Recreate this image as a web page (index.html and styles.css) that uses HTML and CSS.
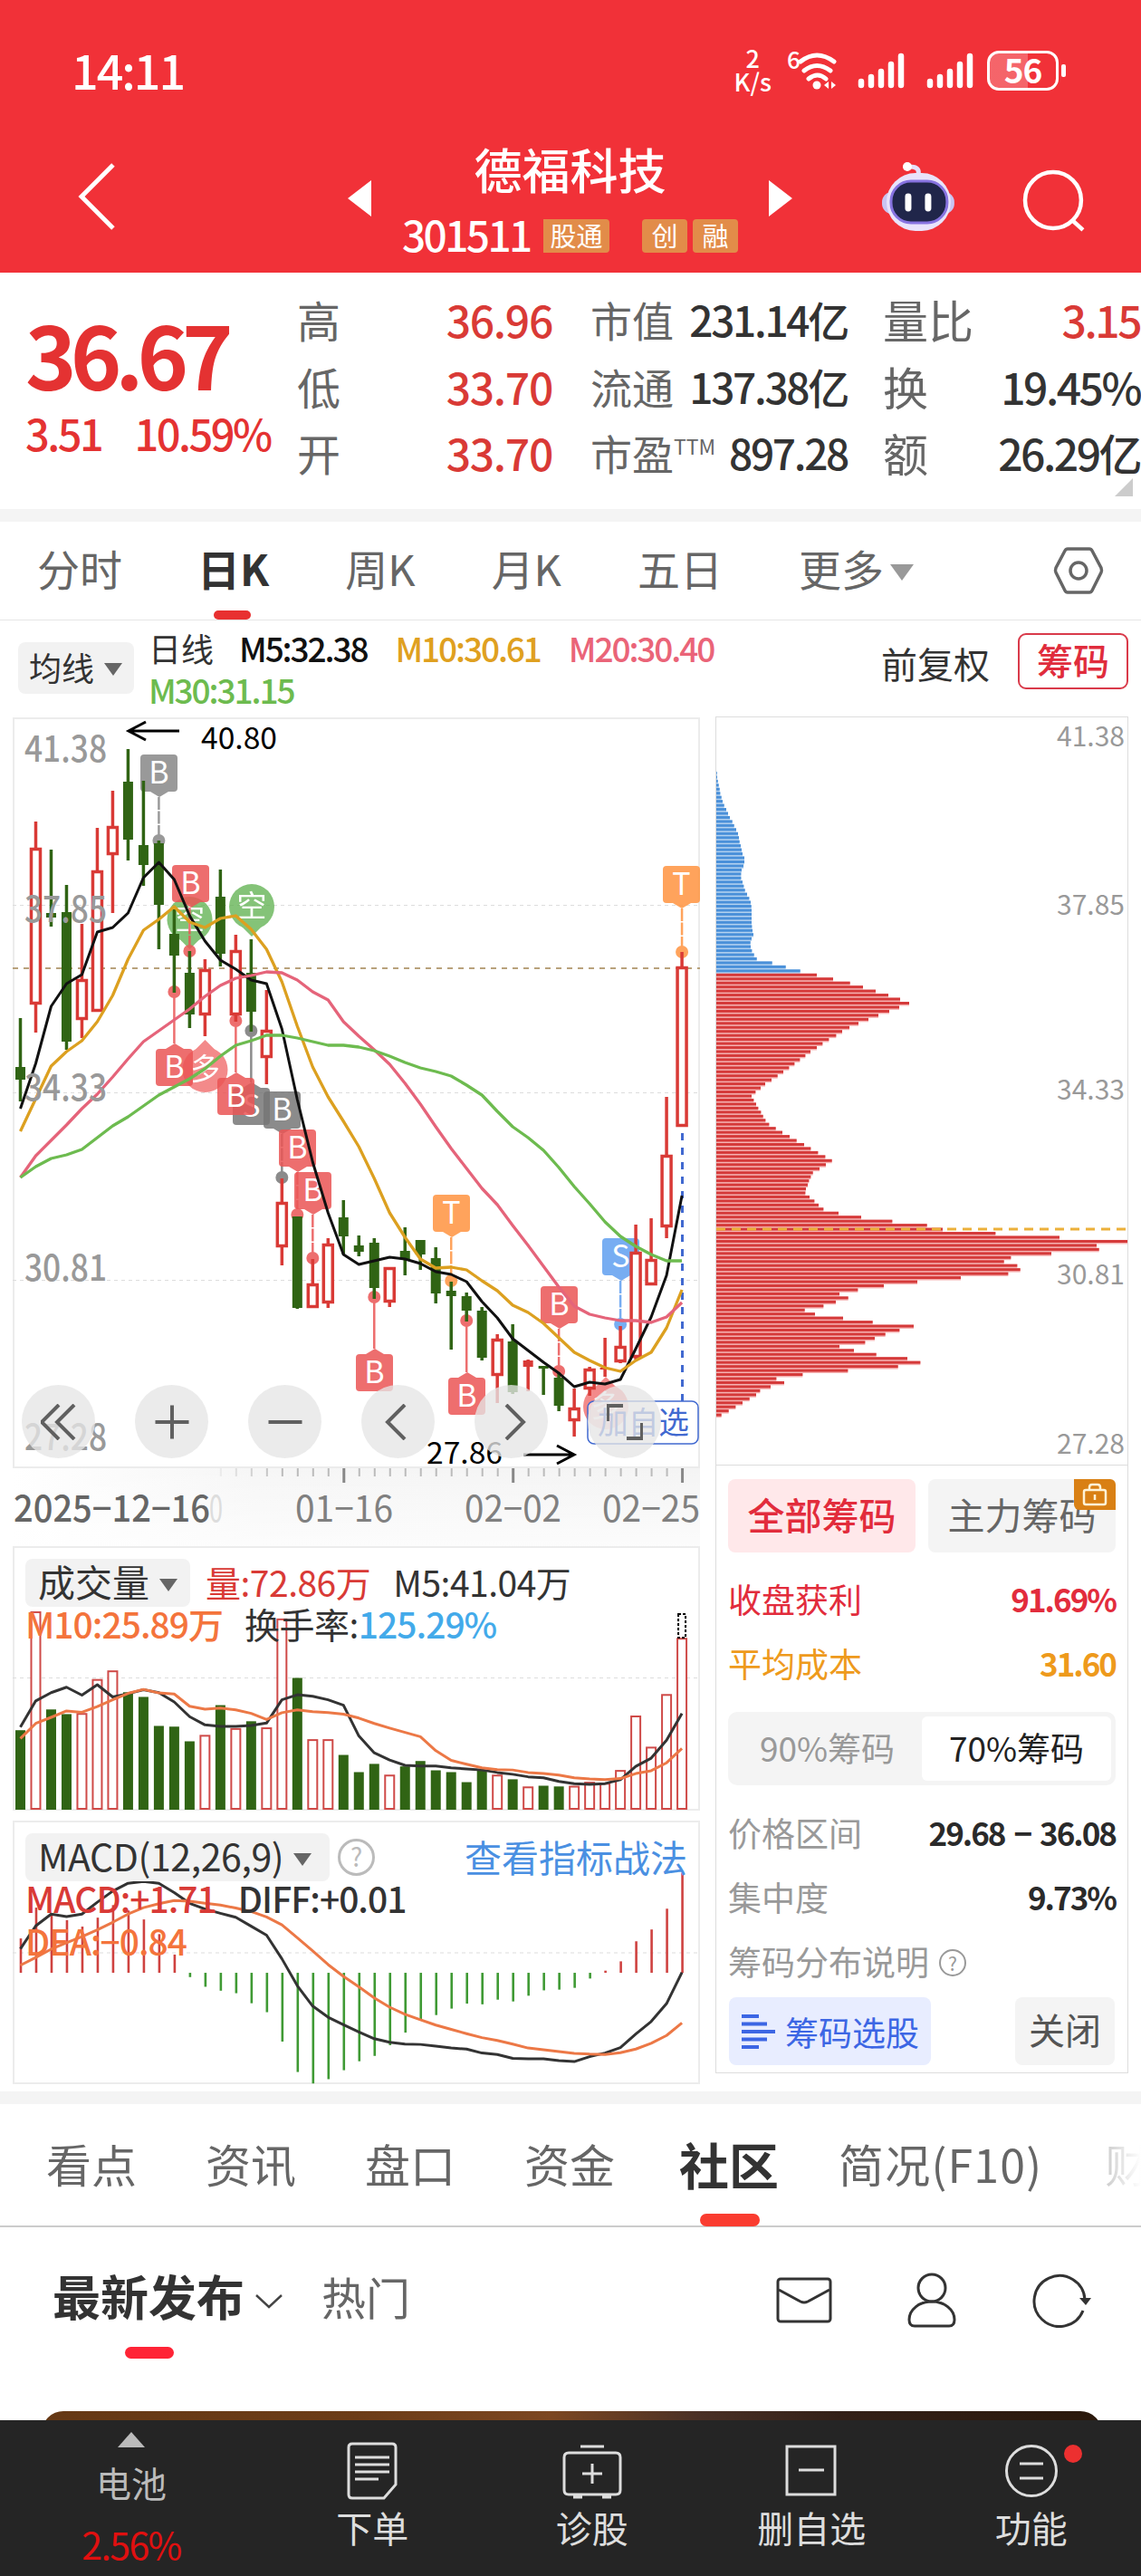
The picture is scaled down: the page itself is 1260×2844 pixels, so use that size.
FILE: index.html
```html
<!DOCTYPE html>
<html lang="zh-CN">
<head>
  <meta charset="UTF-8">
  <meta name="viewport" content="width=device-width, initial-scale=1.0">
  <title>德福科技 301511</title>
  <link rel="stylesheet" href="styles.css">
</head>
<body>
  <div class="app">
    <header class="header">
      <div class="status">
        <span class="time">14:11</span>
        <div class="status-right">
          <span class="speed">2<br>K/s</span>
          <svg class="wifi" width="58" height="44" viewBox="0 0 58 44" fill="none" stroke="#fff" stroke-width="5" stroke-linecap="round">
            <text x="0" y="20" class="wifi-num">6</text>
            <path d="M15 12q18-14 37 0M19 22q14-11 29 0M24 31q10-8 19 0"/>
            <circle cx="33" cy="38" r="4.5" fill="#fff" stroke="none"/>
            <path d="M41 38l5-4v8zM54 38l-5-4v8z" fill="#fff" stroke="none"/>
          </svg>
          <svg class="signal" width="52" height="42" viewBox="0 0 52 42" stroke="#fff" stroke-width="6.5" stroke-linecap="round"><path d="M4 33v4M15 28v9M26 22v15M37 14v23M48 5v32"/></svg>
          <svg class="signal second" width="52" height="42" viewBox="0 0 52 42" stroke="#fff" stroke-width="6.5" stroke-linecap="round"><path d="M4 33v4M15 28v9M26 22v15M37 14v23M48 5v32"/></svg>
          <span class="battery">56</span>
          <i class="battery-nub"></i>
        </div>
      </div>
      <div class="navbar">
        <svg class="back" width="44" height="76" viewBox="0 0 44 76" fill="none" stroke="#fff" stroke-width="5"><path d="M40 3L5 38l35 35"/></svg>
        <svg class="prev" width="26" height="40" viewBox="0 0 26 40"><path d="M26 0v40L0 20z" fill="#fff"/></svg>
        <div class="stock">
          <div class="stock-name">德福科技</div>
          <div class="stock-code">
            <span class="code">301511</span>
            <span class="tag tag-cut">股通</span>
            <span class="tag tag-gap">创</span>
            <span class="tag">融</span>
          </div>
        </div>
        <svg class="next" width="26" height="40" viewBox="0 0 26 40"><path d="M0 0v40l26-20z" fill="#fff"/></svg>
        <svg class="robot" width="84" height="78" viewBox="0 0 84 78">
          <path d="M42 15c2-8-4-9-10-9" fill="none" stroke="#e6e0fa" stroke-width="5"/>
          <circle cx="30" cy="6" r="5" fill="#fff"/>
          <rect x="2" y="34" width="80" height="24" rx="11" fill="#c9c4f2"/>
          <rect x="7" y="13" width="71" height="64" rx="32" fill="#e9e3fb"/>
          <rect x="12" y="22" width="62" height="46" rx="22" fill="#20264a" stroke="#8773e0" stroke-width="3"/>
          <path d="M31 39v13M53 39v13" stroke="#fff" stroke-width="7" stroke-linecap="round"/>
        </svg>
        <svg class="search" width="70" height="70" viewBox="0 0 70 70" fill="none" stroke="#fff" stroke-width="4.5"><circle cx="34" cy="34" r="31"/><path d="M55 56l12 11"/></svg>
      </div>
    </header>

    <section class="quote">
      <div class="price-box">
        <div class="price">36.67</div>
        <div class="change"><span>3.51</span><span>10.59%</span></div>
      </div>
      <div class="quote-col col-a">
        <div><label>高</label><b class="red">36.96</b></div>
        <div><label>低</label><b class="red">33.70</b></div>
        <div><label>开</label><b class="red">33.70</b></div>
      </div>
      <div class="quote-col col-b">
        <div><label>市值</label><b>231.14亿</b></div>
        <div><label>流通</label><b>137.38亿</b></div>
        <div><label>市盈<sup>TTM</sup></label><b>897.28</b></div>
      </div>
      <div class="quote-col col-c">
        <div><label>量比</label><b class="red">3.15</b></div>
        <div><label>换</label><b>19.45%</b></div>
        <div><label>额</label><b>26.29亿</b></div>
      </div>
      <i class="corner"></i>
    </section>

    <nav class="period">
      <a>分时</a>
      <a class="on">日K</a>
      <a>周K</a>
      <a>月K</a>
      <a>五日</a>
      <a>更多<i class="tri"></i></a>
      <svg class="hex" width="56" height="56" viewBox="0 0 56 56" fill="none" stroke="#666" stroke-width="3.5"><path d="M16 4h24q2 0 3 2l10 19q1 3 0 5L43 50q-1 2-3 2H16q-2 0-3-2L3 30q-1-2 0-5L13 6q1-2 3-2z"/><circle cx="28" cy="28" r="9"/></svg>
    </nav>

    <div class="ma-bar">
      <span class="chip">均线<i class="tri"></i></span>
      <div class="ma-list">
        <span class="dark">日线</span><span class="m5">M5:32.38</span><span class="m10">M10:30.61</span><span class="m20">M20:30.40</span><span class="m30">M30:31.15</span>
      </div>
      <span class="adjust">前复权</span>
      <span class="chip-btn">筹码</span>
    </div>

    <main class="charts">
      <div class="left">
        <div class="kline">
          <svg id="kline" width="760" height="830" viewBox="14 790 760 830"></svg>
          <div class="tools">
            <span><svg viewBox="0 0 40 40"><path d="M20 1L1 20l19 19M37 1L18 20l19 19"/></svg></span>
            <span><svg viewBox="0 0 40 40"><path d="M1.500 20h37M20 1.500v37"/></svg></span>
            <span><svg viewBox="0 0 40 40"><path d="M1.500 20h37"/></svg></span>
            <span><svg viewBox="0 0 40 40"><path d="M27 1L8 20l19 19"/></svg></span>
            <span><svg viewBox="0 0 40 40"><path d="M14 1l19 19-19 19"/></svg></span>
            <span><svg viewBox="0 0 40 40"><path d="M1 19V2h17M39 21v17H22"/></svg></span>
          </div>
        </div>
        <svg id="dates" width="760" height="87" viewBox="14 1620 760 87"></svg>
        <div class="panel volume">
          <svg id="volume" width="760" height="292" viewBox="14 0 760 292"></svg>
          <div class="legend">
            <p><span class="chip">成交量<i class="tri"></i></span><span class="red">量:72.86万</span><span class="dark">M5:41.04万</span></p>
            <p><span class="orange">M10:25.89万</span><span class="dark rate">换手率:<em>125.29%</em></span></p>
          </div>
        </div>
        <div class="panel macd">
          <svg id="macd" width="760" height="292" viewBox="14 0 760 292"></svg>
          <div class="legend">
            <p><span class="chip">MACD(12,26,9)<i class="tri"></i></span><span class="help">?</span><a class="guide">查看指标战法</a></p>
            <p><span class="red">MACD:+1.71</span><span class="dark">DIFF:+0.01</span></p>
            <p><span class="orange">DEA:−0.84</span></p>
          </div>
        </div>
      </div>

      <aside class="right">
        <svg id="chips" width="456" height="827" viewBox="790 791 456 827"></svg>
        <div class="dist">
          <div class="dist-tabs">
            <span class="on">全部筹码</span>
            <span>主力筹码
              <i class="lock"><svg width="28" height="26" viewBox="0 0 28 26" fill="none" stroke="#fff3d6" stroke-width="2.500"><rect x="2" y="8" width="24" height="16" rx="2"/><path d="M8 8V5q0-3 3-3h6q3 0 3 3v3M14 13v6"/></svg></i>
            </span>
          </div>
          <div class="dist-row crimson"><span>收盘获利</span><b>91.69%</b></div>
          <div class="dist-row amber"><span>平均成本</span><b>31.60</b></div>
          <div class="segment"><span>90%筹码</span><span class="on">70%筹码</span></div>
          <div class="dist-row"><span>价格区间</span><b class="range">29.68 − 36.08</b></div>
          <div class="dist-row"><span>集中度</span><b>9.73%</b></div>
          <div class="dist-row note"><span>筹码分布说明<i class="help small">?</i></span></div>
          <div class="dist-btns">
            <span class="pick"><svg width="38" height="38" viewBox="0 0 38 38" stroke="#3c66e4" stroke-width="4"><path d="M0 2h19M0 10.500h28M0 19h37M0 27.500h28M0 36h19"/></svg>筹码选股</span>
            <span class="close">关闭</span>
          </div>
        </div>
      </aside>
    </main>

    <nav class="section-tabs">
      <a>看点</a>
      <a>资讯</a>
      <a>盘口</a>
      <a>资金</a>
      <a class="on">社区</a>
      <a class="brief">简况(F10)</a>
      <a class="fade">财务</a>
    </nav>

    <div class="posts-bar">
      <span class="latest">最新发布</span>
      <svg class="down" width="30" height="18" viewBox="0 0 30 18" fill="none" stroke="#444" stroke-width="2.500"><path d="M1 2l14 13L29 2"/></svg>
      <span class="hot">热门</span>
      <div class="posts-icons">
        <svg width="62" height="62" viewBox="0 0 62 62" fill="none" stroke="#333" stroke-width="3"><rect x="2" y="8" width="58" height="47" rx="3"/><path d="M3 20l24 13q4 2 8 0l24-13"/></svg>
        <svg width="62" height="62" viewBox="0 0 62 62" fill="none" stroke="#333" stroke-width="3"><circle cx="31" cy="18" r="15"/><path d="M31 33c-14 0-25 9-25 20q0 7 6 7h38q6 0 6-7c0-11-11-20-25-20z"/></svg>
        <svg width="66" height="62" viewBox="0 0 66 62" fill="none" stroke="#333" stroke-width="3"><path d="M57 43A28 28 0 1 1 59 31"/><path d="M53 29h13l-6 8z" fill="#333" stroke="none"/></svg>
      </div>
    </div>

    <div class="banner-wrap"><div class="banner"></div></div>

    <footer class="tabbar">
      <div class="sector"><i></i><span>电池</span><b>2.56%</b></div>
      <div class="item">
        <svg width="66" height="66" viewBox="0 0 66 66"><path d="M11 3h44q4 0 4 4v41L46 63H11q-4 0-4-4V7q0-4 4-4zM14 18h38M14 26h38M14 34h38M14 42h26"/></svg>
        <span>下单</span>
      </div>
      <div class="item">
        <svg width="66" height="66" viewBox="0 0 66 66"><path d="M7 13h52q5 0 5 5v36q0 5-5 5H7q-5 0-5-5V18q0-5 5-5zM20 6h26M22 36h22M33 25v22M12 62h10M44 62h10"/></svg>
        <span>诊股</span>
      </div>
      <div class="item">
        <svg width="66" height="66" viewBox="0 0 66 66"><path d="M6 6h53v53H6zM19 32h28"/></svg>
        <span>删自选</span>
      </div>
      <div class="item">
        <svg width="66" height="66" viewBox="0 0 66 66"><circle cx="33" cy="33" r="27.500"/><path d="M20 25h26M20 41h26"/></svg>
        <span>功能</span>
        <i class="dot"></i>
      </div>
    </footer>
  </div>
  <script src="charts.js"></script>
</body>
</html>
```

FILE: styles.css
```css
* {
  margin: 0;
  padding: 0;
  box-sizing: border-box;
}
body {
  width: 1260px;
  background: #fff;
  color: #333;
  font-family: "Noto Sans CJK SC", "Noto Sans", sans-serif;
}
i,
em {
  font-style: normal;
}
svg {
  display: block;
}
.app {
  height: 2844px;
  display: flex;
  flex-direction: column;
  overflow: hidden;
}
.red {
  color: #d93a36;
}
.dark {
  color: #333;
}
.orange {
  color: #f4743c;
}
.tri {
  display: inline-block;
  border: 10px solid transparent;
  border-top: 14px solid #666;
  border-bottom: 0;
}

/* header */
.header {
  height: 301px;
  background: #f13138;
  color: #fff;
}
.status {
  height: 156px;
  padding: 56px 83px 0 79px;
  display: flex;
  justify-content: space-between;
}
.time {
  font-size: 52px;
  font-weight: 500;
  line-height: 42px;
  letter-spacing: -2px;
}
.status-right {
  display: flex;
  height: 44px;
}
.speed {
  font-size: 27px;
  line-height: 26px;
  height: 52px;
  text-align: center;
  font-weight: 500;
  margin: -5px 17px 0 0;
}
.wifi-num {
  font-size: 26px;
  font-weight: 500;
  fill: #fff;
  stroke: none;
}
.signal {
  margin: 1px 0 0 20px;
}
.signal.second {
  margin-left: 24px;
}
.battery {
  width: 79px;
  height: 44px;
  margin-left: 15px;
  border: 3.500px solid #fff;
  border-radius: 13px;
  background: linear-gradient(90deg, rgba(255, 255, 255, .25) 58%, transparent 58%);
  font-size: 37px;
  font-weight: 700;
  line-height: 34px;
  letter-spacing: -1px;
  text-align: center;
}
.battery-nub {
  width: 5px;
  height: 14px;
  margin: 15px 0 0 3px;
  border-radius: 2px;
  background: #fff;
}
.navbar {
  height: 145px;
  padding: 0 61px 0 85px;
  display: flex;
}
.back {
  margin-top: 23px;
}
.prev {
  margin: 43px 0 0 255px;
}
.stock {
  width: 440px;
  text-align: center;
}
.stock-name {
  font-size: 53px;
  font-weight: 500;
  line-height: 61px;
}
.stock-code {
  height: 50px;
  margin-top: 18px;
  padding-left: 34px;
  display: flex;
  align-items: center;
}
.code {
  width: 156px;
  font-size: 46px;
  font-weight: 500;
  letter-spacing: -2.600px;
  line-height: 46px;
  margin-top: -4px;
  text-align: left;
}
.tag {
  height: 37px;
  width: 50px;
  margin-right: 6px;
  background: #e28c49;
  border-radius: 4px;
  font-size: 29px;
  line-height: 34px;
}
.tag-cut {
  width: 73px;
  margin-right: 36px;
  border-radius: 0 4px 4px 0;
}
.next {
  margin-top: 43px;
}
.robot {
  margin: 22px 0 0 97px;
}
.search {
  margin: 31px 0 0 73px;
}

/* quote */
.quote {
  position: relative;
  height: 275px;
  border-bottom: 14px solid #f4f4f4;
  display: flex;
  font-size: 48px;
}
.price-box {
  width: 328px;
  padding: 24px 0 0 28px;
  color: #e43232;
}
.price {
  font-size: 96px;
  font-weight: 700;
  line-height: 130px;
  letter-spacing: -7px;
}
.change {
  display: flex;
  gap: 36px;
  font-size: 47px;
  font-weight: 500;
  line-height: 46px;
  letter-spacing: -2.500px;
}
.quote-col {
  padding-top: 15px;
}
.quote-col div {
  height: 73.500px;
  line-height: 73px;
  display: flex;
  justify-content: space-between;
  white-space: nowrap;
}
.quote-col label {
  color: #666;
}
.quote-col b {
  font-weight: 500;
  letter-spacing: -1.300px;
}
.col-a {
  width: 282px;
}
.col-b {
  width: 284px;
  margin-left: 42px;
  font-size: 46px;
}
.col-b b {
  letter-spacing: -2.300px;
}
.col-b sup {
  font-size: 23px;
  vertical-align: 17px;
  line-height: 0;
}
.col-c {
  width: 284px;
  margin-left: 39px;
}
.col-c b {
  letter-spacing: -2.500px;
}
.col-c label {
  font-size: 50px;
}
.corner {
  position: absolute;
  right: 9px;
  bottom: 14px;
  border-left: 20px solid transparent;
  border-bottom: 20px solid #ccc;
}

/* period tabs */
.period {
  height: 109px;
  padding: 0 41px;
  border-bottom: 1px solid #e5e5e5;
  display: flex;
  font-size: 47px;
  line-height: 102px;
  color: #666;
}
.period a {
  position: relative;
  margin-right: 84px;
  white-space: nowrap;
}
.period .on {
  margin-right: 84px;
  margin-left: -1px;
  color: #333;
  font-weight: 700;
}
.period a:nth-child(6) {
  margin-right: 0;
}
.period .on::after {
  content: "";
  position: absolute;
  left: 18px;
  bottom: 0;
  width: 41px;
  height: 10px;
  border-radius: 5px;
  background: #e83030;
}
.period .tri {
  border-width: 18px 13px 0;
  border-top-color: #999;
  margin-left: 7px;
  vertical-align: 6px;
}
.hex {
  margin: 26px 0 0 auto;
}

/* moving averages */
.ma-bar {
  height: 106px;
  padding: 14px 14px 0 20px;
  display: flex;
}
.chip {
  height: 57px;
  padding: 0 12px;
  border-radius: 8px;
  background: #f2f2f2;
  font-size: 36px;
  line-height: 54px;
  white-space: nowrap;
  color: #333;
}
.chip .tri {
  margin-left: 11px;
  vertical-align: 6px;
}
.ma-bar .chip {
  margin-top: 10px;
  width: 128px;
}
.ma-list {
  width: 700px;
  margin: -7px 0 0 16px;
  font-size: 37px;
  line-height: 46px;
  letter-spacing: -2.100px;
  font-weight: 500;
}
.ma-list span {
  margin-right: 31px;
  white-space: nowrap;
}
.ma-list .dark {
  margin-right: 28px;
  font-size: 36px;
  font-weight: 400;
  letter-spacing: 0;
}
.m5 {
  color: #111;
}
.m10 {
  color: #dfa020;
}
.m20 {
  color: #ea6478;
}
.m30 {
  color: #6dbb4f;
  display: inline-block;
}
.adjust {
  margin-left: 109px;
  font-size: 40px;
  line-height: 66px;
  white-space: nowrap;
}
.chip-btn {
  width: 122px;
  height: 62px;
  margin-left: auto;
  border: 2px solid #d93a4a;
  border-radius: 9px;
  color: #e02c3c;
  font-size: 40px;
  font-weight: 500;
  line-height: 54px;
  text-align: center;
}

/* charts */
.charts {
  height: 1518px;
  padding-left: 14px;
  display: flex;
}
.left {
  width: 760px;
}
.kline {
  position: relative;
  height: 829px;
}
.tools {
  position: absolute;
  left: 10px;
  bottom: 10px;
  display: flex;
  gap: 44px;
}
.tools span {
  width: 81px;
  height: 81px;
  border-radius: 50%;
  background: rgba(230, 230, 230, .78);
  display: flex;
  align-items: center;
  justify-content: center;
}
.tools svg {
  width: 40px;
  height: 40px;
  fill: none;
  stroke: #606060;
  stroke-width: 4;
}
#kline,
#dates,
#volume,
#macd,
#chips {
  font-size: 40px;
}
.panel {
  position: relative;
  height: 292px;
  margin-bottom: 11px;
}
.panel svg {
  display: block;
}
.legend {
  position: absolute;
  left: 0;
  top: 14px;
  width: 760px;
  padding: 0 15px 0 14px;
  font-size: 39px;
  letter-spacing: -.500px;
}
.legend p {
  display: flex;
  height: 47px;
  line-height: 36px;
  white-space: nowrap;
  gap: 24px;
}
.legend p:first-child {
  height: 53px;
  line-height: 50px;
  gap: 17px;
}
.volume p:first-child .red {
  margin-right: 8px;
}
.volume .orange,
.macd p:nth-child(n+2) {
  font-weight: 500;
  letter-spacing: -1px;
}
.legend .chip {
  height: 53px;
  padding: 0 14px;
  font-size: 41px;
  line-height: 48px;
  letter-spacing: 0;
}
.macd .chip {
  width: 336px;
  letter-spacing: -.400px;
}
.rate em {
  color: #43aaea;
  font-weight: 500;
  letter-spacing: -1px;
}
.help {
  width: 41px;
  height: 41px;
  border: 3px solid #bbb;
  border-radius: 50%;
  color: #bbb;
  font-size: 28px;
  line-height: 34px;
  text-align: center;
}
.legend .help {
  margin: 6px 0 0 -8px;
  line-height: 33px;
}
.guide {
  margin-left: auto;
  font-size: 41px;
  color: #4a90e2;
  letter-spacing: 0;
}

/* chip distribution */
.right {
  width: 456px;
  margin-left: 16px;
}
.dist {
  height: 671px;
  border: 1px solid #ddd;
  border-top: 0;
  padding: 15px 13px 0;
}
.dist-tabs {
  display: flex;
  gap: 14px;
  margin-bottom: 15px;
}
.dist-tabs span {
  position: relative;
  width: 207px;
  height: 81px;
  border-radius: 8px;
  background: #f4f4f4;
  color: #666;
  font-size: 41px;
  line-height: 77px;
  text-align: center;
}
.dist-tabs .on {
  background: #ffe8ea;
  color: #e22c3c;
  font-weight: 500;
}
.lock {
  position: absolute;
  right: 0;
  top: 0;
  width: 46px;
  height: 34px;
  padding: 4px 9px;
  background: #d98014;
  border-radius: 0 6px 0 6px;
}
.dist-row {
  height: 71px;
  display: flex;
  justify-content: space-between;
  align-items: center;
  font-size: 37px;
  color: #999;
}
.dist-row b {
  font-size: 35px;
  font-weight: 700;
  letter-spacing: -2px;
  color: #2a2a2a;
}
.dist-row .range {
  word-spacing: 4px;
}
.crimson,
.crimson b {
  color: #e22c3c;
}
.amber,
.amber b {
  color: #ee9a1c;
}
.segment {
  height: 81px;
  margin: 19px 0 16px;
  padding: 5px;
  display: flex;
  border-radius: 10px;
  background: #f4f4f4;
  font-size: 37px;
  line-height: 68px;
  text-align: center;
  color: #999;
}
.segment span {
  width: 209px;
  border-radius: 6px;
}
.segment .on {
  background: #fff;
  color: #222;
}
.dist-row .small {
  display: inline-block;
  width: 30px;
  height: 30px;
  margin-left: 11px;
  border-width: 2px;
  border-color: #999;
  color: #999;
  font-size: 21px;
  line-height: 26px;
  vertical-align: 5px;
}
.dist-btns {
  display: flex;
  justify-content: space-between;
  margin-top: 5px;
  padding: 0 1px;
  font-size: 37px;
  line-height: 70px;
}
.pick {
  width: 223px;
  height: 75px;
  padding-left: 14px;
  display: flex;
  align-items: center;
  gap: 10px;
  border-radius: 8px;
  background: #e8edff;
  color: #3c66e4;
  white-space: nowrap;
}
.close {
  width: 110px;
  height: 75px;
  border-radius: 8px;
  background: #f4f4f4;
  font-size: 40px;
  text-align: center;
  color: #555;
}

/* section tabs */
.section-tabs {
  position: relative;
  height: 150px;
  border-top: 14px solid #f4f4f4;
  border-bottom: 2px solid #ccc;
  padding-left: 51px;
  display: flex;
  font-size: 50px;
  line-height: 130px;
  color: #666;
}
.section-tabs a {
  position: relative;
  margin-right: 76px;
  white-space: nowrap;
}
.section-tabs a:nth-child(4) {
  margin-right: 71px;
}
.section-tabs .on {
  margin-right: 66px;
  color: #333;
  font-size: 55px;
  font-weight: 700;
}
.section-tabs .on::after {
  content: "";
  position: absolute;
  left: 23px;
  bottom: -1px;
  width: 66px;
  height: 14px;
  border-radius: 7px;
  background: #fa3c30;
}
.section-tabs .brief {
  letter-spacing: 1.200px;
  margin-right: 69px;
}
.section-tabs .fade {
  background: linear-gradient(90deg, #ccc, #fff 40px);
  -webkit-background-clip: text;
  background-clip: text;
  color: transparent;
}

/* posts */
.posts-bar {
  position: relative;
  height: 203px;
  padding: 31px 55px 0 58px;
  display: flex;
}
.latest {
  font-size: 53px;
  font-weight: 700;
  line-height: 88px;
}
.posts-bar::after {
  content: "";
  position: absolute;
  left: 138px;
  top: 132px;
  width: 54px;
  height: 13px;
  border-radius: 7px;
  background: #ff2436;
}
.down {
  margin: 42px 0 0 12px;
}
.hot {
  margin-left: 43px;
  font-size: 49px;
  line-height: 90px;
  color: #666;
}
.posts-icons {
  margin: 18px 0 0 auto;
  display: flex;
  gap: 79px;
}
.banner-wrap {
  height: 10px;
  padding: 0 43px 0 46px;
  overflow: hidden;
}
.banner {
  height: 60px;
  border-radius: 24px;
  background: linear-gradient(90deg, #653815 0%, #6c3c18 30%, #7c4722 48%, #4a3026 62%, #332018 75%, #2a180c 100%);
}

/* bottom bar */
.tabbar {
  height: 172px;
  background: #252525;
  color: #ddd;
  display: flex;
  font-size: 40px;
}
.sector {
  width: 290px;
  display: flex;
  flex-direction: column;
  align-items: center;
}
.sector i {
  margin-top: 13px;
  border: 15px solid transparent;
  border-top: 0;
  border-bottom: 17px solid #bbb;
}
.sector span {
  margin-top: 8px;
  line-height: 60px;
  color: #bbb;
  font-size: 39px;
}
.sector b {
  margin-top: 8px;
  font-size: 41px;
  line-height: 60px;
  font-weight: 400;
  letter-spacing: -1.600px;
  color: #e01010;
}
.item {
  position: relative;
  width: 242.500px;
  padding-top: 23px;
  display: flex;
  flex-direction: column;
  align-items: center;
}
.item svg {
  fill: none;
  stroke: #ddd;
  stroke-width: 3;
}
.item span {
  line-height: 59px;
}
.dot {
  position: absolute;
  left: 157px;
  top: 27px;
  width: 20px;
  height: 20px;
  border-radius: 50%;
  background: #ec3030;
}
```

FILE: charts.js
```js
const GREEN = '#306414'
const RED = '#d93a36'
const STEP = 16.99
const x = i => 22.5 + STEP * i

// type, high, body top, body bottom, low
const candles = [
  ['g', 1123, 1177, 1191, 1215], ['r', 906, 935, 1108, 1139], ['g', 937, 1007, 1012, 1022], ['g', 976, 1006, 1149, 1158],
  ['r', 1019, 1080, 1125, 1145], ['r', 913, 960, 1116, 1116], ['r', 872, 911, 943, 1007], ['g', 826, 862, 926, 949],
  ['g', 861, 932, 954, 977], ['g', 927, 930, 998, 1047], ['g', 1002, 1030, 1054, 1095], ['g', 1049, 1073, 1119, 1134],
  ['r', 1058, 1069, 1120, 1143], ['g', 959, 989, 1052, 1066], ['r', 1031, 1048, 1120, 1127], ['g', 1036, 1073, 1116, 1138],
  ['r', 1092, 1136, 1167, 1196], ['r', 1300, 1326, 1376, 1396], ['g', 1342, 1342, 1443, 1444], ['r', 1389, 1416, 1443, 1443],
  ['r', 1366, 1372, 1438, 1443], ['g', 1324, 1343, 1364, 1384], ['g', 1363, 1374, 1381, 1386], ['g', 1366, 1371, 1421, 1433],
  ['r', 1398, 1398, 1437, 1442], ['g', 1354, 1380, 1389, 1407], ['g', 1368, 1368, 1384, 1401], ['g', 1376, 1388, 1427, 1438],
  ['g', 1414, 1424, 1430, 1489], ['g', 1426, 1430, 1446, 1458], ['g', 1442, 1446, 1498, 1501], ['r', 1472, 1477, 1518, 1548],
  ['g', 1461, 1480, 1536, 1538], ['r', 1500, 1501, 1508, 1535], ['g', 1507, 1507, 1510, 1539], ['g', 1514, 1520, 1551, 1557],
  ['r', 1532, 1553, 1568, 1585], ['r', 1508, 1510, 1533, 1540], ['r', 1476, 1509, 1511, 1519], ['r', 1463, 1485, 1503, 1504],
  ['r', 1351, 1381, 1498, 1500], ['r', 1344, 1389, 1418, 1418], ['r', 1210, 1274, 1354, 1366], ['r', 1050, 1066, 1243, 1243]
]
const ma5 = [1223, 1173, 1110, 1085, 1075, 1028, 1023, 1007, 968, 951, 970, 1010, 1038, 1059, 1069, 1081, 1085, 1135, 1213, 1282, 1338, 1384, 1395, 1391, 1387, 1389, 1394, 1403, 1406, 1414, 1436, 1454, 1477, 1490, 1503, 1515, 1530, 1525, 1527, 1522, 1488, 1453, 1407, 1319]
const ma10 = [1248, 1212, 1176, 1160, 1148, 1127, 1098, 1058, 1026, 1014, 1000, 1017, 1023, 1013, 1010, 1025, 1047, 1083, 1132, 1177, 1210, 1237, 1265, 1300, 1338, 1365, 1389, 1399, 1398, 1401, 1413, 1424, 1440, 1448, 1460, 1476, 1492, 1501, 1509, 1513, 1501, 1492, 1465, 1423]
const ma20 = [1299, 1275, 1258, 1241, 1223, 1207, 1188, 1168, 1149, 1137, 1125, 1113, 1099, 1087, 1079, 1076, 1072, 1073, 1081, 1094, 1103, 1127, 1143, 1158, 1174, 1195, 1218, 1243, 1267, 1289, 1311, 1329, 1352, 1374, 1397, 1420, 1441, 1450, 1454, 1457, 1457, 1459, 1453, 1437]
const ma30 = [1299, 1287, 1278, 1274, 1268, 1255, 1242, 1232, 1220, 1208, 1199, 1190, 1179, 1165, 1153, 1148, 1142, 1142, 1145, 1149, 1153, 1153, 1155, 1159, 1165, 1172, 1178, 1182, 1187, 1197, 1208, 1226, 1243, 1255, 1269, 1288, 1309, 1328, 1348, 1364, 1375, 1384, 1391, 1391]

// letter, color, candle index, box left, box top, dot y
const marks = [
  ['B', '#888', 9, 155, 832, 928], ['B', '#eb5555', 11, 190, 954, 1050], ['B', '#eb5555', 10, 172, 1157, 1095],
  ['S', '#777', 15, 257, 1200, 1138], ['B', '#eb5555', 14, 240, 1189, 1127], ['B', '#777', 17, 291, 1204, 1300],
  ['B', '#eb5555', 18, 308, 1246, 1341], ['B', '#eb5555', 19, 325, 1293, 1389], ['B', '#eb5555', 23, 393, 1494, 1432],
  ['T', '#ff9440', 28, 478, 1318, 1414], ['B', '#eb5555', 29, 495, 1520, 1458], ['B', '#eb5555', 35, 597, 1419, 1514],
  ['S', '#609ff0', 39, 665, 1366, 1462], ['T', '#ff9440', 43, 732, 955, 1051]
]

const volumes = [222, 554, 280, 267, 270, 365, 389, 328, 315, 234, 232, 191, 209, 292, 228, 247, 230, 534, 368, 197, 197, 153, 105, 128, 98, 121, 136, 110, 105, 77, 110, 98, 85, 65, 67, 65, 67, 78, 75, 111, 263, 176, 323, 480]
const vol5 = [548, 475, 452, 437, 459, 430, 464, 455, 444, 452, 478, 519, 542, 546, 546, 544, 537, 472, 458, 462, 472, 487, 573, 620, 640, 655, 657, 657, 662, 665, 668, 675, 680, 687, 690, 700, 706, 708, 706, 695, 658, 635, 585, 510]
const vol10 = [580, 538, 521, 503, 507, 491, 472, 454, 443, 453, 456, 490, 498, 495, 500, 510, 527, 508, 500, 505, 508, 512, 523, 538, 551, 563, 575, 614, 641, 652, 662, 667, 668, 675, 678, 682, 690, 693, 695, 692, 678, 670, 648, 608]

const macd = [1138, 1052, 1070, 1087, 1105, 1080, 1045, 1060, 1085, 1126, 1183, 1246, 1273, 1284, 1291, 1319, 1344, 1426, 1511, 1543, 1531, 1506, 1481, 1466, 1436, 1401, 1363, 1352, 1334, 1320, 1322, 1309, 1314, 1298, 1283, 1281, 1276, 1250, 1228, 1202, 1146, 1113, 1055, 955]
const diff = [1167, 1103, 1070, 1077, 1070, 1037, 1006, 984, 979, 984, 1010, 1040, 1056, 1068, 1079, 1104, 1129, 1195, 1270, 1327, 1358, 1379, 1399, 1418, 1428, 1433, 1434, 1439, 1444, 1447, 1458, 1462, 1473, 1474, 1474, 1479, 1482, 1468, 1458, 1443, 1405, 1370, 1320, 1233]
const dea = [1213, 1191, 1168, 1150, 1133, 1114, 1093, 1070, 1052, 1041, 1032, 1034, 1040, 1045, 1053, 1063, 1078, 1100, 1136, 1173, 1211, 1244, 1273, 1304, 1330, 1350, 1365, 1380, 1392, 1404, 1415, 1423, 1433, 1444, 1449, 1454, 1459, 1461, 1462, 1457, 1447, 1431, 1409, 1374]

const blueChips = [35, 36, 38, 41, 44, 46, 50, 54, 59, 66, 72, 78, 86, 92, 99, 105, 108, 110, 114, 117, 120, 126, 126, 123, 117, 115, 115, 120, 124, 128, 135, 142, 147, 149, 150, 150, 150, 150, 151, 153, 156, 150, 146, 147, 151, 158, 167, 218, 263, 311]
const redChips = [366, 420, 476, 519, 561, 603, 642, 672, 639, 606, 570, 537, 504, 474, 450, 430, 406, 385, 366, 345, 328, 310, 292, 274, 255, 236, 216, 195, 180, 163, 150, 157, 165, 172, 181, 188, 196, 208, 230, 252, 276, 299, 324, 346, 370, 394, 416, 396, 375, 353, 346, 340, 336, 330, 328, 342, 358, 372, 388, 438, 513, 616, 731, 783, 958, 1170, 1395, 1293, 1301, 1143, 1009, 986, 1030, 1040, 1000, 843, 699, 588, 502, 441, 470, 429, 388, 326, 360, 453, 551, 687, 640, 593, 558, 526, 441, 489, 563, 666, 709, 635, 469, 319, 232, 258, 213, 178, 165, 143, 120, 97, 74, 50]

const rect = (l, t, w, h, attr) => `<rect x="${l}" y="${t}" width="${w}" height="${h}" ${attr}/>`
const path = (d, color, w, attr = '') => `<path d="${d}" fill="none" stroke="${color}" stroke-width="${w}" ${attr}/>`
const line = (ys, color, w = 3) => path('M' + ys.map((y, i) => `${x(i)} ${y}`).join('L'), color, w, 'stroke-linejoin="round"')
const text = (str, l, y, w, color, attr = '') => `<text x="${l}" y="${y}" textLength="${w}" lengthAdjust="spacingAndGlyphs" fill="${color}" ${attr}>${str}</text>`
const put = (id, html) => { document.getElementById(id).innerHTML = html }

function drawKline() {
  let s = rect(15, 792, 757, 827, 'fill="none" stroke="#ececec" stroke-width="2"')
  ;[998.5, 1205.5, 1412.5].forEach(y => { s += path(`M14 ${y}H772`, '#ddd', 1, 'stroke-dasharray="4 4"') })
  s += path('M14 1068H773', '#b9a27c', 2, 'stroke-dasharray="6 6"')
  // long / short bubbles
  ;[['空', '#5cb04c', 209.5, 1014, 1], ['空', '#5cb04c', 278, 1000, 1], ['多', '#f06464', 226.5, 1180, -1], ['多', '#f06464', 669, 1552, -1]].forEach(b => {
    s += `<g opacity=".75"><circle cx="${b[2]}" cy="${b[3]}" r="25" fill="${b[1]}"/><path d="M${b[2] - 12} ${b[3] + b[4] * 21}h24l-12 ${b[4] * 12}z" fill="${b[1]}"/>`
    s += `<text x="${b[2]}" y="${b[3] + 11}" font-size="33" text-anchor="middle" fill="#fff">${b[0]}</text></g>`
  })
  marks.forEach(m => {
    const cx = x(m[2])
    const down = m[5] > m[4]
    const edge = down ? m[4] + 41 : m[4]
    s += `<g opacity=".85">${path(`M${cx} ${edge + (down ? 6 : -6)}V${m[5]}`, m[1], 2.5, down ? 'stroke-dasharray="14 1.500"' : '')}`
    s += `<circle cx="${cx}" cy="${m[5] - 1}" r="7" fill="${m[1]}"/>${rect(m[3], m[4], 41, 41, `rx="4" fill="${m[1]}"`)}`
    s += `<path d="M${m[3] + 11} ${edge}h20l-10 ${down ? 6 : -6}z" fill="${m[1]}"/></g>`
    s += `<text x="${m[3] + 20.5}" y="${m[4] + 32}" font-size="34" text-anchor="middle" fill="#fff">${m[0]}</text>`
  })
  candles.forEach((c, i) => {
    const [type, high, top, bottom, low] = c
    const color = type === 'g' ? GREEN : RED
    s += path(`M${x(i)} ${high}V${top}M${x(i)} ${bottom}V${low}`, color, 3.5)
    if (type === 'g' || bottom - top < 8) s += rect(x(i) - 5.5, top, 11, bottom - top, `fill="${color}"`)
    else s += rect(x(i) - 5, top + 1.5, 10, bottom - top - 3, `fill="#fff" stroke="${color}" stroke-width="3.500"`)
  })
  s += path('M753.500 1250V1546', '#4169d0', 3, 'stroke-dasharray="8 8"')
  s += line(ma5, '#111') + line(ma10, '#dca020', 3.3) + line(ma20, '#e5647a', 3.3) + line(ma30, '#6dbb4f', 3.3)
  ;[['41.38', 840], ['37.85', 1017], ['34.33', 1214], ['30.81', 1413], ['27.28', 1600]].forEach(p => {
    s += text(p[0], 27, p[1], 91, '#999', 'font-weight="500"')
  })
  s += text('40.80', 222, 826, 84, '#000', 'font-size="33"') + path('M198 806H142M161 796l-19 10 19 10', '#000', 3)
  s += text('27.86', 471, 1615, 84, '#000', 'font-size="33"') + path('M578 1605H634M615 1595l19 10-19 10', '#000', 3)
  s += rect(649, 1546, 122, 47, 'rx="7" fill="#fff" fill-opacity=".6" stroke="#4169d0" stroke-width="1.500"')
  s += text('加自选', 660, 1582, 101, '#4169d0', 'font-size="34"')
  put('kline', s)
}

function drawDates() {
  let s = '<defs><linearGradient id="axis"><stop offset="0" stop-color="#fff"/><stop offset=".35" stop-color="#f6f6f6"/><stop offset="1" stop-color="#f4f4f4"/></linearGradient>'
  s += '<linearGradient id="fall" x2="0" y2="1"><stop offset="0" stop-color="#fff" stop-opacity="0"/><stop offset="1" stop-color="#fff" stop-opacity=".7"/></linearGradient></defs>'
  s += rect(14, 1620, 759, 87, 'fill="url(#axis)"') + rect(14, 1620, 759, 87, 'fill="url(#fall)"')
  for (let i = 13; i < 44; i++) {
    const big = i === 21 || i === 32 || i === 43
    s += path(`M${x(i) + 0.5} 1620v${big ? 17 : 10}`, big ? '#888' : '#bbb', big ? 3 : 2, i < 17 ? `opacity="${(i - 12) / 5}"` : '')
  }
  s += text('0', 231, 1680, 15, '#ddd')
  s += text('2025−12−16', 15, 1680, 217, '#666', 'font-weight="500"')
  s += text('01−16', 326, 1680, 108, '#808080') + text('02−02', 513, 1680, 107, '#808080') + text('02−25', 665, 1680, 108, '#808080')
  put('dates', s)
}

function drawVolume() {
  const k = 0.3954
  let s = rect(15, 1, 757, 290, 'fill="none" stroke="#ececec" stroke-width="2"')
  s += path('M14 145.500H772', '#ddd', 1, 'stroke-dasharray="4 4"')
  volumes.forEach((v, i) => {
    const h = v * k
    if (candles[i][0] === 'g') s += rect(x(i) - 5.5, 291 - h, 11, h, `fill="${GREEN}"`)
    else s += rect(x(i) - 5, 292 - h, 10, h - 2, 'fill="#fff" stroke="#cf4a48" stroke-width="2"')
  })
  s += rect(x(43) - 4, 75, 8, 26, 'fill="none" stroke="#000" stroke-width="2" stroke-dasharray="3 2"')
  s += line(vol5.map(v => (v - 43) * k), '#333') + line(vol10.map(v => (v - 43) * k), '#ec7846')
  put('volume', s)
}

function drawMacd() {
  const k = 0.3954
  const y = v => (v - 809) * k
  let s = rect(15, 1, 757, 289, 'fill="none" stroke="#ececec" stroke-width="2"')
  s += path('M14 146H772', '#ddd', 1, 'stroke-dasharray="4 4"')
  macd.forEach((v, i) => {
    s += path(`M${x(i) + 0.5} ${y(1234)}V${y(v)}`, v < 1234 ? '#cf4240' : '#3f9a34', 2.6)
  })
  s += line(diff.map(y), '#333') + line(dea.map(y), '#ec7846')
  put('macd', s)
}

function drawChips() {
  let s = rect(790.5, 791.5, 455, 826, 'fill="none" stroke="#ddd"')
  const bar = (v, i, color, light) => {
    const top = 1074.8 + 4.457 * i
    s += rect(791, top, (v - 33) / 3, 4.457, `fill="${light}"`) + rect(791, top, (v - 33) / 3, 3, `fill="${color}"`)
  }
  blueChips.forEach((v, i) => bar(v, i - 50, '#4a90d9', '#b4d2f0'))
  redChips.forEach((v, i) => bar(v, i, '#d53a3a', '#f6b4b4'))
  s += path('M791 1357H1245', '#ecb03a', 3, 'stroke-dasharray="10 7"')
  ;[['41.38', 824], ['37.85', 1010], ['34.33', 1214], ['30.81', 1418], ['27.28', 1605]].forEach(p => {
    s += text(p[0], 1167, p[1], 75, '#999', 'font-size="30"')
  })
  put('chips', s)
}

drawKline()
drawDates()
drawVolume()
drawMacd()
drawChips()
```
